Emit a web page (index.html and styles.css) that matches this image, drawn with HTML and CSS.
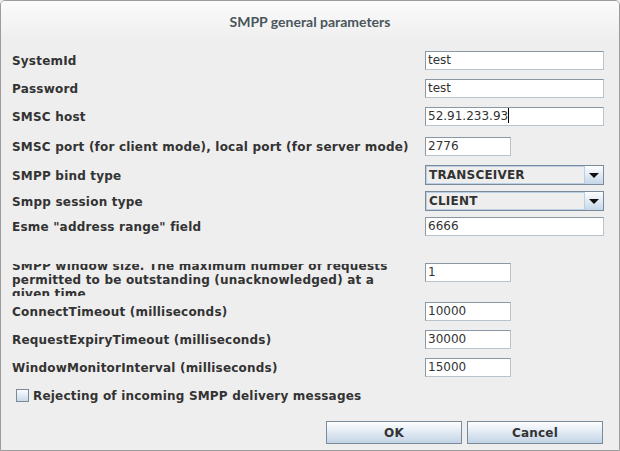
FILE: index.html
```html
<!DOCTYPE html>
<html lang="en">
<head>
    <meta charset="UTF-8" />
    <title>SMPP general parameters</title>
    <link rel="stylesheet" href="styles.css">
</head>
<body>
  <div class="dialog">
    <div class="titlebar">SMPP general parameters</div>

    <div class="content">
      <div class="row">
        <div class="label">SystemId</div>
        <div class="field wide">test</div>
      </div>
      <div class="row">
        <div class="label">Password</div>
        <div class="field wide">test</div>
      </div>
      <div class="row">
        <div class="label">SMSC host</div>
        <div class="field wide">52.91.233.93<span class="caret"></span></div>
      </div>
      <div class="row gap-10">
        <div class="label">SMSC port (for client mode), local port (for server mode)</div>
        <div class="field short">2776</div>
      </div>
      <div class="row gap-9">
        <div class="label">SMPP bind type</div>
        <div class="combo">
          <div class="combo-value">TRANSCEIVER</div>
          <div class="combo-arrow"><span class="triangle"></span></div>
        </div>
      </div>
      <div class="row gap-6">
        <div class="label">Smpp session type</div>
        <div class="combo">
          <div class="combo-value">CLIENT</div>
          <div class="combo-arrow"><span class="triangle"></span></div>
        </div>
      </div>
      <div class="row gap-5">
        <div class="label">Esme "address range" field</div>
        <div class="field wide">6666</div>
      </div>
      <div class="row tall gap-26">
        <div class="label clipped">
          <div class="clip-text">SMPP window size. The maximum number of requests permitted to be outstanding (unacknowledged) at a given time</div>
        </div>
        <div class="field short">1</div>
      </div>
      <div class="row gap-4">
        <div class="label">ConnectTimeout (milliseconds)</div>
        <div class="field short">10000</div>
      </div>
      <div class="row">
        <div class="label">RequestExpiryTimeout (milliseconds)</div>
        <div class="field short">30000</div>
      </div>
      <div class="row">
        <div class="label">WindowMonitorInterval (milliseconds)</div>
        <div class="field short">15000</div>
      </div>
      <div class="row check-row">
        <span class="checkbox"></span>
        <span class="label">Rejecting of incoming SMPP delivery messages</span>
      </div>

      <div class="buttons">
        <button class="btn">OK</button>
        <button class="btn">Cancel</button>
      </div>
    </div>
  </div>
</body>
</html>
```

FILE: styles.css
```css
html,
body {
  margin: 0;
  padding: 0;
  background-color: #eeeeee;
}
.dialog {
  width: 620px;
  height: 451px;
  box-sizing: border-box;
  border: 1px solid #9c9c9c;
  border-radius: 5px 5px 0 0;
  background-color: #eeeeee;
  overflow: hidden;
  font-family: "DejaVu Sans", sans-serif;
  font-size: 12px;
  color: #333333;
}
.titlebar {
  height: 44px;
  line-height: 41px;
  text-align: center;
  font-family: Lato, "Open Sans", sans-serif;
  font-weight: bold;
  font-size: 14px;
  color: #4b565c;
  background: linear-gradient(#fbfbfb, #ededed);
}
.content {
  padding: 5px 15px 0 11px;
  display: flex;
  flex-direction: column;
}
.row {
  display: flex;
  align-items: flex-start;
  height: 20px;
  margin-top: 8px;
}
.row:first-child {
  margin-top: 0;
}
.gap-10 { margin-top: 10px; }
.gap-9 { margin-top: 9px; }
.gap-6 { margin-top: 6px; }
.gap-5 { margin-top: 5px; }
.gap-26 { margin-top: 26px; }
.gap-4 { margin-top: 4px; }
.row.tall {
  height: 35px;
}
.label {
  width: 413px;
  flex-shrink: 0;
  height: 20px;
  line-height: 22px;
  font-weight: bold;
  letter-spacing: 0.2px;
  white-space: nowrap;
}
.label.clipped {
  height: 32px;
  margin-top: 2px;
  overflow: hidden;
  display: flex;
  align-items: center;
  white-space: normal;
  line-height: 14px;
}
.clip-text {
  width: 395px;
  flex-shrink: 0;
}
.field {
  box-sizing: border-box;
  height: 19px;
  margin-top: 1px;
  padding: 0 2px;
  line-height: 17px;
  background-color: #ffffff;
  border: 1px solid #8a98a6;
  border-right-color: #b9c3cc;
  border-bottom-color: #b9c3cc;
  white-space: nowrap;
}
.field.wide {
  width: 180px;
}
.field.short {
  width: 86px;
}
.caret {
  display: inline-block;
  width: 1px;
  height: 15px;
  vertical-align: -3px;
  background-color: #000000;
}
.combo {
  box-sizing: border-box;
  width: 180px;
  height: 20px;
  display: flex;
  border: 1px solid #7a8a99;
  background-color: #eeeeee;
}
.combo-value {
  flex: 1;
  box-sizing: border-box;
  border: 1px solid #b8cfe5;
  border-right: none;
  padding-left: 2px;
  line-height: 16px;
  font-weight: bold;
  letter-spacing: 0.2px;
}
.combo-arrow {
  width: 18px;
  border-left: 1px solid #b8cfe5;
  background: linear-gradient(#fdfeff, #c5d6e8);
  display: flex;
  align-items: center;
  justify-content: center;
}
.triangle {
  width: 0;
  height: 0;
  border-left: 5px solid transparent;
  border-right: 5px solid transparent;
  border-top: 5px solid #111111;
  margin-top: 1px;
}
.check-row {
  align-items: center;
  padding-left: 4px;
}
.check-row .label {
  width: auto;
}
.checkbox {
  box-sizing: border-box;
  width: 13px;
  height: 13px;
  margin-right: 4px;
  border: 1px solid #7a8a99;
  background: linear-gradient(#fbfcfe, #c9d8e8);
}
.buttons {
  display: flex;
  justify-content: flex-end;
  gap: 5px;
  margin-top: 16px;
  margin-right: 1px;
}
.btn {
  box-sizing: border-box;
  width: 136px;
  height: 23px;
  border: 1px solid #7a8a99;
  background: linear-gradient(#fdfeff, #c3d4e6);
  font-family: "DejaVu Sans", sans-serif;
  font-size: 12px;
  font-weight: bold;
  letter-spacing: 0.2px;
  color: #333333;
  padding: 0;
}
```
